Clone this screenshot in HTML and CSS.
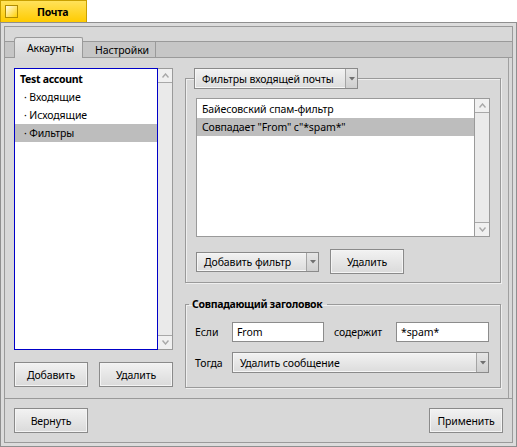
FILE: index.html
```html
<!DOCTYPE html>
<html lang="ru">
<head>
<meta charset="utf-8">
<title>Почта</title>
<link rel="stylesheet" href="styles.css">
</head>
<body>
<div class="wtab">
  <span class="closebox"></span>
  <span class="wtitle">Почта</span>
</div>
<div class="frame">
  <div class="content">
    <div class="tabview">
      <div class="tabs">
        <div class="tabstart"></div>
        <div class="tab active">Аккаунты</div>
        <div class="tab">Настройки</div>
        <div class="tabrest"></div>
      </div>
      <div class="panel">
        <div class="left">
          <div class="listwrap">
            <div class="list focus">
              <div class="row bold">Test account</div>
              <div class="row sub">· Входящие</div>
              <div class="row sub">· Исходящие</div>
              <div class="row sub sel">· Фильтры</div>
            </div>
            <div class="vscroll">
              <div class="sarrow up"><svg width="7" height="5" viewBox="0 0 7 5"><path d="M0.5 4.5 L3.5 1 L6.5 4.5" fill="none" stroke="#a8a8a8" stroke-width="1.4"/></svg></div>
              <div class="strack"></div>
              <div class="sarrow down"><svg width="7" height="5" viewBox="0 0 7 5"><path d="M0.5 0.5 L3.5 4 L6.5 0.5" fill="none" stroke="#a8a8a8" stroke-width="1.4"/></svg></div>
            </div>
          </div>
          <div class="btnrow">
            <div class="btn">Добавить</div>
            <div class="btn">Удалить</div>
          </div>
        </div>
        <div class="right">
          <fieldset class="group g1">
            <legend class="menulegend">
              <div class="menu m1"><span class="mtext">Фильтры входящей почты</span><span class="marrow"><svg width="6" height="4" viewBox="0 0 6 4"><path d="M0 0 H6 L3 3.5 Z" fill="#707070"/></svg></span></div>
            </legend>
            <div class="listwrap flist">
              <div class="list">
                <div class="row">Байесовский спам-фильтр</div>
                <div class="row sel">Совпадает "From" c"*spam*"</div>
              </div>
              <div class="vscroll">
                <div class="sarrow up"><svg width="7" height="5" viewBox="0 0 7 5"><path d="M0.5 4.5 L3.5 1 L6.5 4.5" fill="none" stroke="#a8a8a8" stroke-width="1.4"/></svg></div>
                <div class="strack"></div>
                <div class="sarrow down"><svg width="7" height="5" viewBox="0 0 7 5"><path d="M0.5 0.5 L3.5 4 L6.5 0.5" fill="none" stroke="#a8a8a8" stroke-width="1.4"/></svg></div>
              </div>
            </div>
            <div class="frow">
              <div class="menu m2"><span class="mtext">Добавить фильтр</span><span class="marrow"><svg width="6" height="4" viewBox="0 0 6 4"><path d="M0 0 H6 L3 3.5 Z" fill="#707070"/></svg></span></div>
              <div class="btn">Удалить</div>
            </div>
          </fieldset>
          <fieldset class="group g2">
            <legend class="textlegend">Совпадающий заголовок</legend>
            <div class="grid">
              <span class="lbl">Если</span>
              <div class="input">From</div>
              <span class="lbl lbl-mid">содержит</span>
              <div class="input">*spam*</div>
              <span class="lbl">Тогда</span>
              <div class="menu m3"><span class="mtext">Удалить сообщение</span><span class="marrow"><svg width="6" height="4" viewBox="0 0 6 4"><path d="M0 0 H6 L3 3.5 Z" fill="#707070"/></svg></span></div>
            </div>
          </fieldset>
        </div>
      </div>
    </div>
    <div class="bottom">
      <div class="btn">Вернуть</div>
      <div class="btn">Применить</div>
    </div>
  </div>
</div>
</body>
</html>
```

FILE: styles.css
```css
* { box-sizing: border-box; }
html, body { margin: 0; padding: 0; }
body {
  background: #ffffff;
  font-family: "Noto Sans", "DejaVu Sans", sans-serif;
  font-size: 10.5px;
  letter-spacing: -0.1px;
  color: #000;
  width: 517px;
  height: 447px;
  overflow: hidden;
}
.wtitle, .row.bold, .textlegend {
  font-weight: bold;
  font-size: 10.5px;
  letter-spacing: -0.3px;
}

/* window tab */
.wtab {
  width: 87px;
  height: 22px;
  background: linear-gradient(#ffe25a, #ffcb00);
  border: 1px solid #c9a000;
  border-bottom: none;
  display: flex;
  align-items: center;
  padding-left: 4px;
}
.closebox {
  width: 13px;
  height: 13px;
  border: 1px solid #b08c00;
  background: linear-gradient(135deg, #fffbe8, #ffd000);
}
.wtitle {
  margin-left: 19px;
}

/* window frame */
.frame {
  height: 425px;
  border: 1px solid #8f8f8f;
  background: #dcdcdc;
  padding: 3px;
}
.content {
  height: 100%;
  border: 1px solid #9a9a9a;
  background: #d8d8d8;
  display: flex;
  flex-direction: column;
}

/* tab view */
.tabview {
  height: 372px;
  display: flex;
  flex-direction: column;
  border-bottom: 1px solid #999;
}
.tabs {
  display: flex;
  align-items: flex-end;
  height: 31px;
}
.tabstart, .tab, .tabrest {
  height: 17px;
  background: #c6c6c6;
  border-top: 1px solid #9a9a9a;
  border-bottom: 1px solid #9a9a9a;
}
.tabstart {
  width: 9px;
}
.tab {
  border-right: 1px solid #9a9a9a;
  display: flex;
  align-items: center;
  width: 73px;
  padding-left: 12px;
  white-space: nowrap;
}
.tab.active {
  height: 21px;
  width: 69px;
  background: linear-gradient(#e6e6e6, #d8d8d8);
  border-left: 1px solid #9a9a9a;
  border-bottom: none;
  border-top-left-radius: 3px;
  border-top-right-radius: 2px;
  padding-left: 12px;
}
.tabrest {
  flex: 1;
}
.panel {
  flex: 1;
  display: flex;
  padding: 10px 0 0 9px;
  border-right: 1px solid #a0a0a0;
  margin-right: 3px;
}

/* left column */
.left {
  width: 159px;
  display: flex;
  flex-direction: column;
}
.listwrap {
  display: flex;
  height: 282px;
}
.list {
  flex: 1;
  background: #fff;
  border: 1px solid #9a9a9a;
  padding-top: 1px;
}
.list.focus { border-color: #0000c8; }
.row {
  height: 18px;
  line-height: 18px;
  padding-left: 5px;
  white-space: nowrap;
}
.row.sub { padding-left: 9px; }
.row.sel { background: #bdbdbd; }
.vscroll {
  width: 15px;
  display: flex;
  flex-direction: column;
  border: 1px solid #9a9a9a;
  border-left: none;
  background: #eeeeee;
}
.sarrow {
  height: 14px;
  display: flex;
  align-items: center;
  justify-content: center;
  background: #f0f0f0;
}
.sarrow.up { border-bottom: 1px solid #a8a8a8; }
.sarrow.down { border-top: 1px solid #a8a8a8; }
.strack { flex: 1; background: #eaeaea; }

.btnrow {
  display: flex;
  gap: 11px;
  margin-top: 12px;
}
.btn {
  width: 74px;
  height: 25px;
  border: 1px solid #8a8a8a;
  box-shadow: inset 0 0 0 1px #f4f4f4;
  background: linear-gradient(#f2f2f2, #dadada);
  display: flex;
  align-items: center;
  justify-content: center;
  white-space: nowrap;
}

/* right column */
.right {
  margin-left: 12px;
  width: 316px;
  display: flex;
  flex-direction: column;
}
.group {
  margin: 0;
  min-width: 0;
  border: 1px solid #9a9a9a;
  box-shadow: 1px 1px 0 #efefef, inset 1px 1px 0 #efefef;
}
.g1 {
  height: 215px;
  padding: 0 10px 0 10px;
}
.menulegend { padding: 0; margin-left: -2px; }
.menu {
  height: 21px;
  border: 1px solid #8a8a8a;
  box-shadow: inset 0 0 0 1px #f6f6f6;
  background: linear-gradient(#f2f2f2, #dcdcdc);
  display: flex;
  align-items: stretch;
}
.mtext {
  flex: 1;
  display: flex;
  align-items: center;
  padding-left: 7px;
  white-space: nowrap;
}
.marrow {
  width: 12px;
  border-left: 1px solid #a4a4a4;
  background: linear-gradient(#e6e6e6, #cfcfcf);
  display: flex;
  align-items: center;
  justify-content: center;
}
.m1 { width: 164px; }
.m2 { width: 123px; height: 20px; }
.flist {
  height: 139px;
  margin-top: 9px;
}
.frow {
  display: flex;
  align-items: center;
  gap: 11px;
  margin-top: 12px;
}
.g2 {
  margin-top: 14px;
  height: 91px;
  padding: 11px 10px 0 9px;
}
.textlegend {
  padding: 0 4px 0 3px;
  margin-left: -6px;
}
.grid {
  display: grid;
  grid-template-columns: 37px 92px 72px 93px;
  grid-template-rows: 20px 21px;
  row-gap: 10px;
  align-items: center;
}
.lbl { white-space: nowrap; }
.lbl-mid { padding-left: 10px; }
.input {
  height: 20px;
  background: #fff;
  border: 1px solid #8c8c8c;
  display: flex;
  align-items: center;
  padding-left: 4px;
}
.m3 { grid-column: 2 / 5; }

/* bottom bar */
.bottom {
  flex: 1;
  display: flex;
  justify-content: space-between;
  align-items: flex-start;
  padding: 9px 9px 0 9px;
}
```
